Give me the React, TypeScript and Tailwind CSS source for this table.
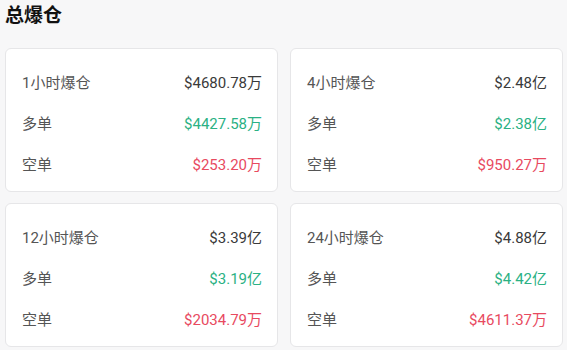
import React from "react";

type Row = { label: string; value: string; tone: "base" | "up" | "down" };

const cards: Row[][] = [
  [
    { label: "1小时爆仓", value: "$4680.78万", tone: "base" },
    { label: "多单", value: "$4427.58万", tone: "up" },
    { label: "空单", value: "$253.20万", tone: "down" },
  ],
  [
    { label: "4小时爆仓", value: "$2.48亿", tone: "base" },
    { label: "多单", value: "$2.38亿", tone: "up" },
    { label: "空单", value: "$950.27万", tone: "down" },
  ],
  [
    { label: "12小时爆仓", value: "$3.39亿", tone: "base" },
    { label: "多单", value: "$3.19亿", tone: "up" },
    { label: "空单", value: "$2034.79万", tone: "down" },
  ],
  [
    { label: "24小时爆仓", value: "$4.88亿", tone: "base" },
    { label: "多单", value: "$4.42亿", tone: "up" },
    { label: "空单", value: "$4611.37万", tone: "down" },
  ],
];

const toneClass = {
  base: "text-[#3a3a3a]",
  up: "text-[#2bb184]",
  down: "text-[#e84a5f]",
};

export default function App() {
  return (
    <div
      className="w-[567px] h-[350px] bg-[#f7f7f8] px-[5px] overflow-hidden"
      style={{ fontFamily: 'Roboto, "Noto Sans CJK SC", sans-serif' }}
    >
      <div className="h-[48px] pt-[1px] text-[19px] leading-[30px] font-bold text-[#111111]">
        总爆仓
      </div>
      <div className="grid grid-cols-2 gap-x-[12px] gap-y-[11px] w-[558px]">
        {cards.map((rows, i) => (
          <div
            key={i}
            className="bg-white border border-[#e6e6e8] rounded-[6px] pt-[14px] pb-[5px] pl-[16px] pr-[15px]"
          >
            {rows.map((r, j) => (
              <div key={j} className="h-[41px] flex items-center justify-between text-[15px]">
                <span className="text-[#555555]">{r.label}</span>
                <span className={toneClass[r.tone]}>{r.value}</span>
              </div>
            ))}
          </div>
        ))}
      </div>
    </div>
  );
}
